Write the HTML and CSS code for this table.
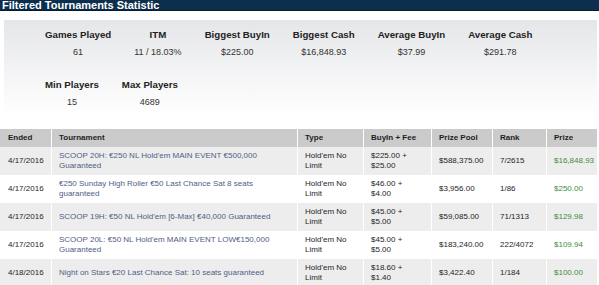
FILE: index.html
```html
<!DOCTYPE html>
<html>
<head>
<meta charset="utf-8">
<link rel="stylesheet" href="styles.css">
</head>
<body>
<div class="bar">Filtered Tournaments Statistic</div>
<div class="stats">
  <div class="stat-row">
    <div class="stat"><div class="label">Games Played</div><div class="value">61</div></div>
    <div class="stat"><div class="label">ITM</div><div class="value">11 / 18.03%</div></div>
    <div class="stat"><div class="label">Biggest BuyIn</div><div class="value">$225.00</div></div>
    <div class="stat"><div class="label">Biggest Cash</div><div class="value">$16,848.93</div></div>
    <div class="stat"><div class="label">Average BuyIn</div><div class="value">$37.99</div></div>
    <div class="stat"><div class="label">Average Cash</div><div class="value">$291.78</div></div>
  </div>
  <div class="stat-row">
    <div class="stat"><div class="label">Min Players</div><div class="value">15</div></div>
    <div class="stat"><div class="label">Max Players</div><div class="value">4689</div></div>
  </div>
</div>
<table class="tour">
  <colgroup>
    <col class="c-ended"><col class="c-tour"><col class="c-type"><col class="c-buy"><col class="c-pool"><col class="c-rank"><col class="c-prize">
  </colgroup>
  <thead>
    <tr><th>Ended</th><th>Tournament</th><th>Type</th><th>BuyIn + Fee</th><th>Prize Pool</th><th>Rank</th><th>Prize</th></tr>
  </thead>
  <tbody>
    <tr class="odd"><td>4/17/2016</td><td class="name">SCOOP 20H: €250 NL Hold'em MAIN EVENT €500,000 Guaranteed</td><td>Hold'em No Limit</td><td>$225.00 + $25.00</td><td>$588,375.00</td><td>7/2615</td><td class="prize">$16,848.93</td></tr>
    <tr><td>4/17/2016</td><td class="name">€250 Sunday High Roller €50 Last Chance Sat 8 seats guaranteed</td><td>Hold'em No Limit</td><td>$46.00 + $4.00</td><td>$3,956.00</td><td>1/86</td><td class="prize">$250.00</td></tr>
    <tr class="odd"><td>4/17/2016</td><td class="name">SCOOP 19H: €50 NL Hold'em [6-Max] €40,000 Guaranteed</td><td>Hold'em No Limit</td><td>$45.00 + $5.00</td><td>$59,085.00</td><td>71/1313</td><td class="prize">$129.98</td></tr>
    <tr><td>4/17/2016</td><td class="name">SCOOP 20L: €50 NL Hold'em MAIN EVENT LOW€150,000 Guaranteed</td><td>Hold'em No Limit</td><td>$45.00 + $5.00</td><td>$183,240.00</td><td>222/4072</td><td class="prize">$109.94</td></tr>
    <tr class="odd"><td>4/18/2016</td><td class="name">Night on Stars €20 Last Chance Sat: 10 seats guaranteed</td><td>Hold'em No Limit</td><td>$18.60 + $1.40</td><td>$3,422.40</td><td>1/184</td><td class="prize">$100.00</td></tr>
  </tbody>
</table>
</body>
</html>
```

FILE: styles.css
```css
html, body {
  margin: 0;
  padding: 0;
  background: #fff;
  font-family: "Liberation Sans", Arial, sans-serif;
}
.bar {
  height: 10px;
  background: #0b2f4d;
  border-bottom: 1px solid #051a2c;
  color: #fff;
  font-weight: bold;
  font-size: 11px;
  line-height: 10px;
  padding-left: 2px;
  overflow: hidden;
  white-space: nowrap;
}
.stats {
  margin: 9px 2px 0 4px;
  padding: 8px 0 6px 29.5px;
  background: linear-gradient(#e5e6e9, #ffffff);
}
.stat-row {
  display: flex;
}
.stat-row + .stat-row {
  margin-top: 19px;
}
.stat {
  padding: 0 11.5px;
  text-align: center;
}
.label {
  font-size: 9.7px;
  font-weight: bold;
  line-height: 14px;
  color: #222;
}
.value {
  margin-top: 3px;
  font-size: 9px;
  line-height: 14px;
  color: #333;
}
.tour {
  margin-top: 14px;
  width: 597px;
  border-collapse: separate;
  border-spacing: 0;
  table-layout: fixed;
  font-size: 8px;
}
.c-ended { width: 51px; }
.c-tour { width: 246px; }
.c-type { width: 66px; }
.c-buy { width: 68px; }
.c-pool { width: 61px; }
.c-rank { width: 54px; }
.c-prize { width: 51px; }
.tour th, .tour td {
  box-sizing: border-box;
  border-left: 1px solid #fff;
  padding: 0 8px 0 7px;
  text-align: left;
}
.tour th:first-child, .tour td:first-child {
  border-left: none;
  padding-left: 8px;
}
.tour th {
  background: #cbcbcb;
  color: #1e1e1e;
  font-weight: bold;
  height: 18px;
  line-height: 10px;
}
.tour td {
  height: 28px;
  line-height: 10px;
  color: #1e1e1e;
  vertical-align: middle;
}
.tour tr.odd td {
  background: #ededed;
}
.tour td.name {
  color: #4f5d86;
}
.tour td.prize {
  color: #3e8e3e;
  padding-right: 1px;
}
```
